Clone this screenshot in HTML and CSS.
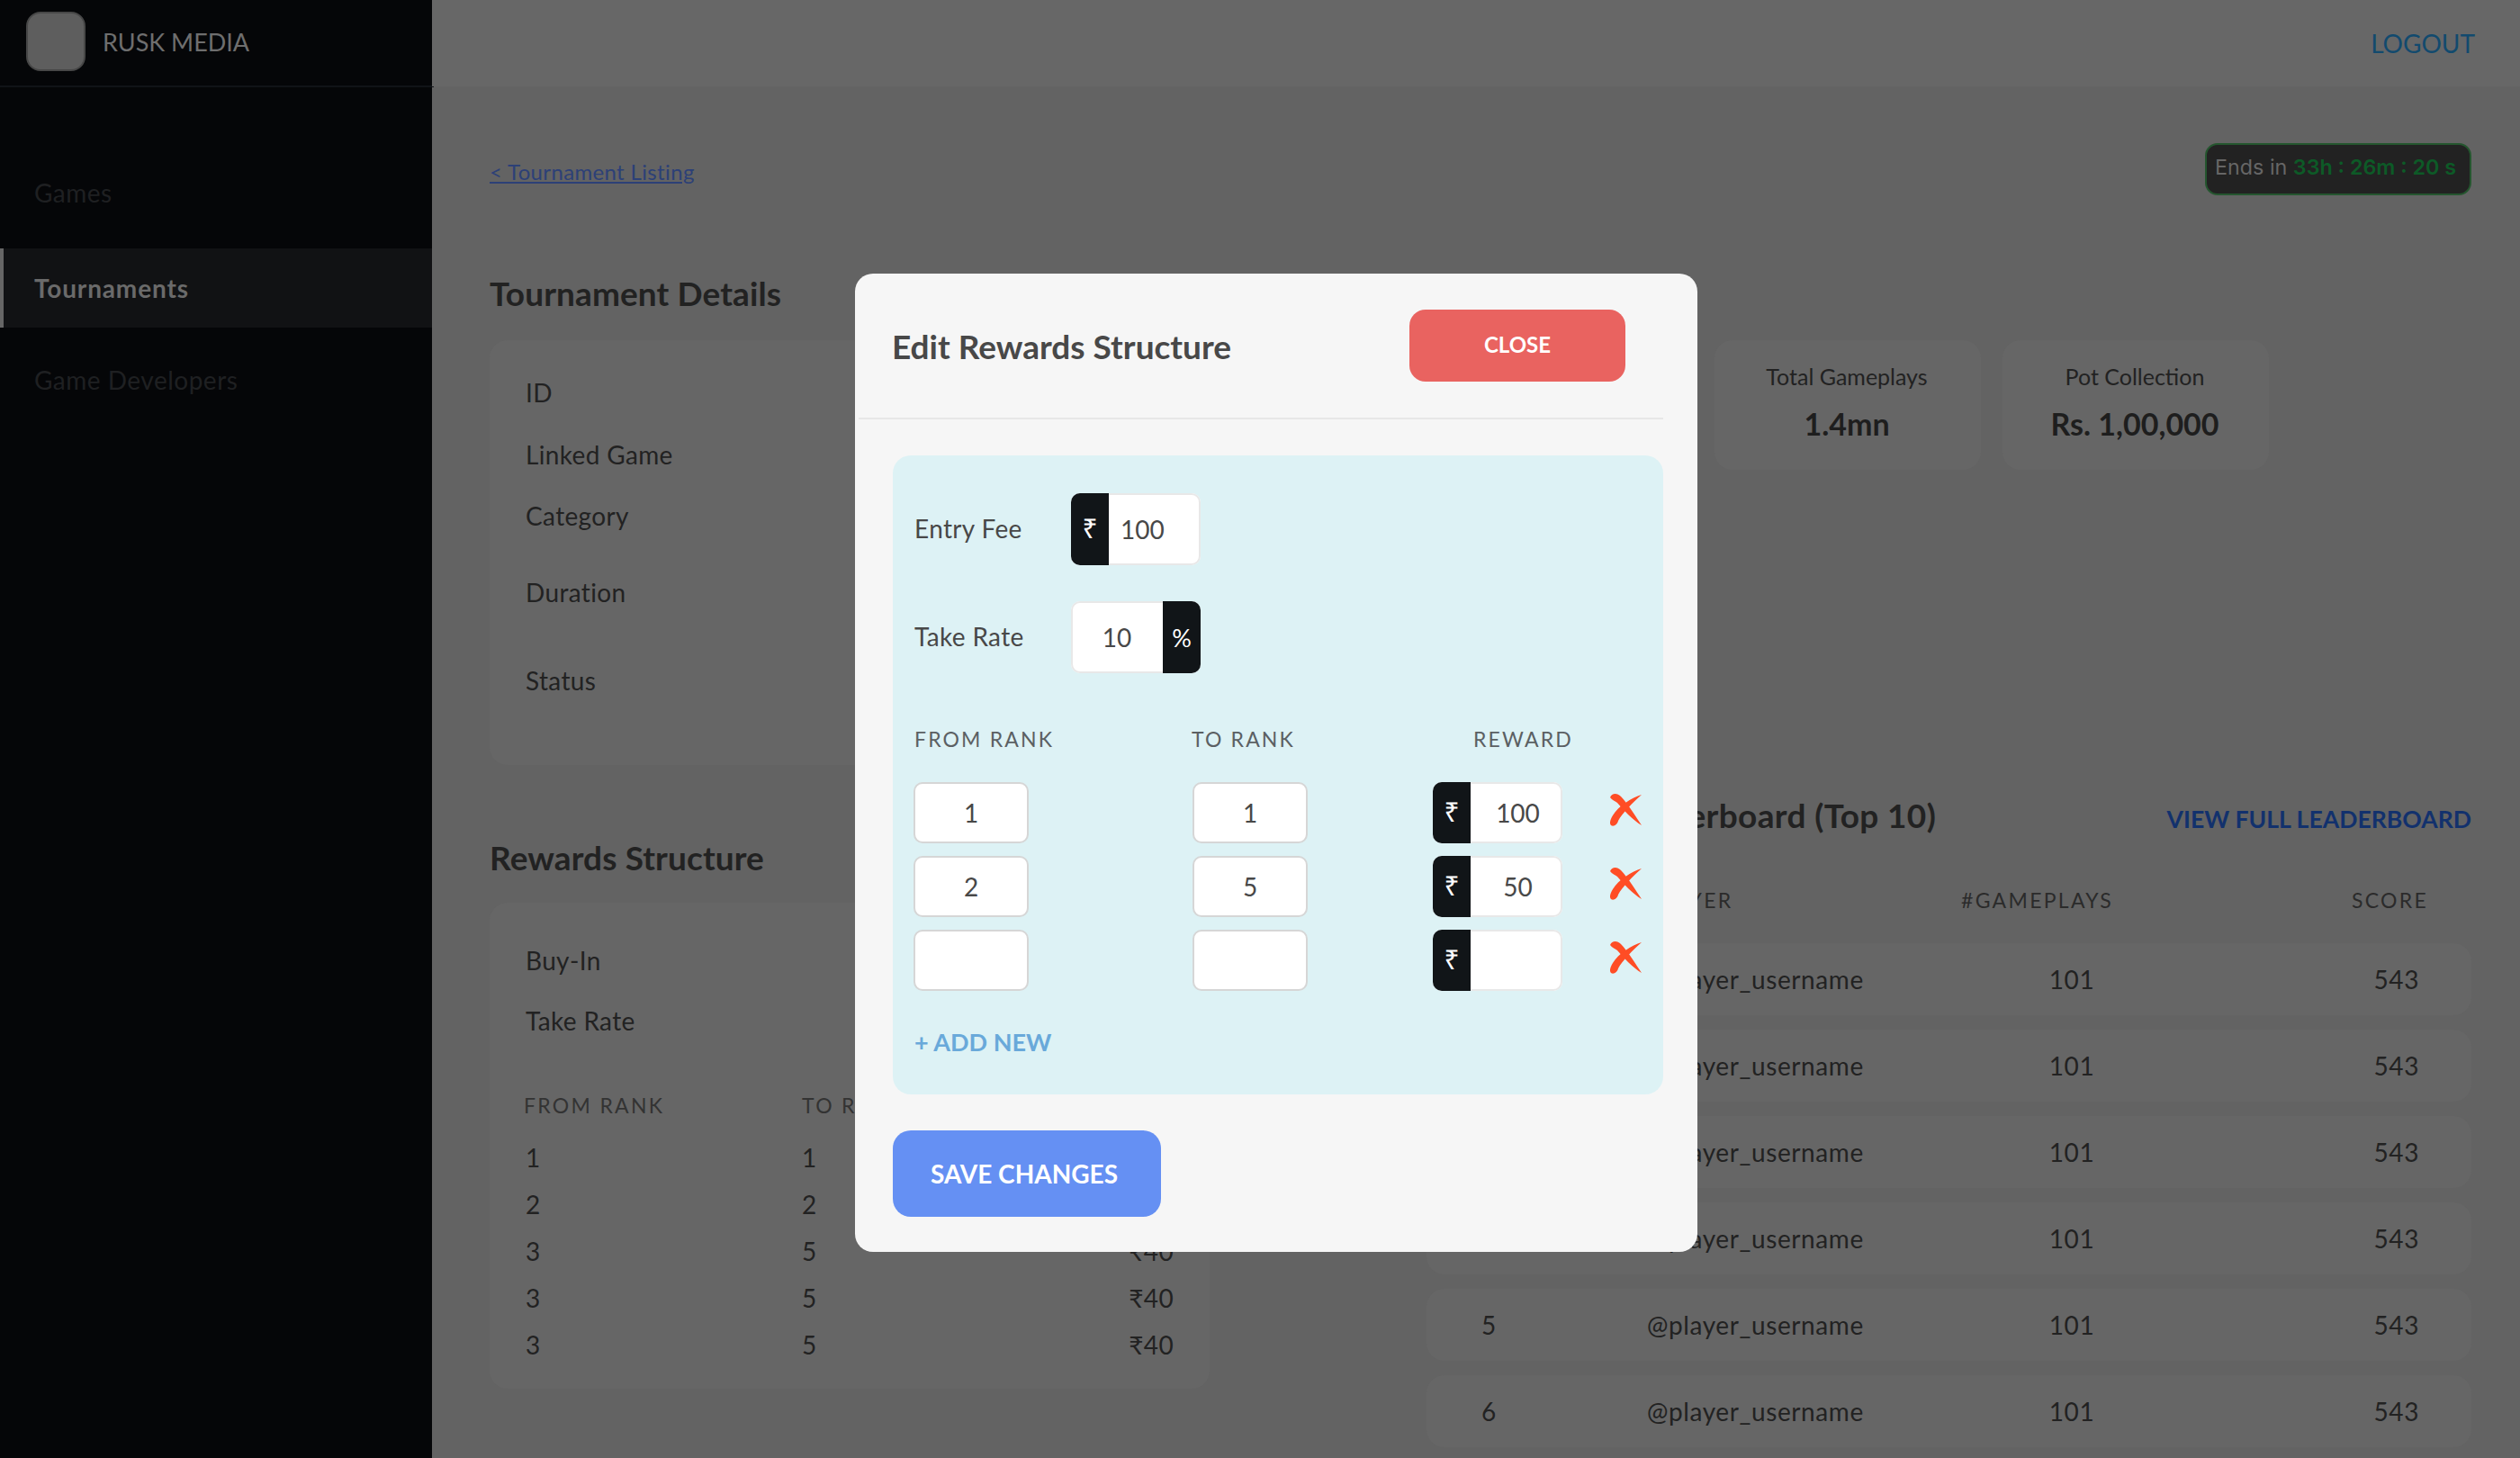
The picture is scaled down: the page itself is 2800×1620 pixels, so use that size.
FILE: index.html
```html
<!DOCTYPE html>
<html lang="en">
<head>
<meta charset="utf-8">
<title>Edit Rewards Structure</title>
<link rel="stylesheet" href="styles.css">
</head>
<body>
<div class="app">
  <aside class="sidebar">
    <div class="brand"><span class="logo"></span><span class="brand-name">RUSK MEDIA</span></div>
    <nav class="nav">
      <a class="nav-item">Games</a>
      <a class="nav-item active">Tournaments</a>
      <a class="nav-item">Game Developers</a>
    </nav>
  </aside>
  <div class="main">
    <header class="topbar"><a class="logout">LOGOUT</a></header>
    <div class="content">
      <div class="crumbs">
        <a class="back">&lt; Tournament Listing</a>
        <div class="timer">Ends in <b>33h : 26m : 20 s</b></div>
      </div>
      <div class="columns">
        <div class="col-left">
          <h2 class="h-details">Tournament Details</h2>
          <section class="card details">
            <p class="r-id">ID</p>
            <p class="r-game">Linked Game</p>
            <p class="r-cat">Category</p>
            <p class="r-dur">Duration</p>
            <p class="r-status">Status</p>
          </section>
          <h2 class="h-rewards">Rewards Structure</h2>
          <section class="card rewards">
            <p class="r-buy">Buy-In</p>
            <p class="r-take">Take Rate</p>
            <div class="rw-grid rw-head"><span>FROM RANK</span><span>TO RANK</span><span class="amt">REWARD</span></div>
            <div class="rw-grid"><span>1</span><span>1</span><span class="amt">₹100</span></div>
            <div class="rw-grid"><span>2</span><span>2</span><span class="amt">₹50</span></div>
            <div class="rw-grid"><span>3</span><span>5</span><span class="amt">₹40</span></div>
            <div class="rw-grid"><span>3</span><span>5</span><span class="amt">₹40</span></div>
            <div class="rw-grid"><span>3</span><span>5</span><span class="amt">₹40</span></div>
          </section>
        </div>
        <div class="col-right">
          <div class="stats">
            <div class="card stat"></div>
            <div class="card stat"><span>Total Gameplays</span><strong>1.4mn</strong></div>
            <div class="card stat"><span>Pot Collection</span><strong>Rs. 1,00,000</strong></div>
          </div>
          <div class="lb-title"><h2>Tournament Leaderboard (Top 10)</h2><a>VIEW FULL LEADERBOARD</a></div>
          <div class="lb-grid lb-head"><span></span><span>PLAYER</span><span>#GAMEPLAYS</span><span class="c-score">SCORE</span></div>
          <div class="lb-grid lb-row"><span>1</span><span>@player_username</span><span class="c-num">101</span><span class="c-sc">543</span></div>
          <div class="lb-grid lb-row"><span>2</span><span>@player_username</span><span class="c-num">101</span><span class="c-sc">543</span></div>
          <div class="lb-grid lb-row"><span>3</span><span>@player_username</span><span class="c-num">101</span><span class="c-sc">543</span></div>
          <div class="lb-grid lb-row"><span>4</span><span>@player_username</span><span class="c-num">101</span><span class="c-sc">543</span></div>
          <div class="lb-grid lb-row"><span>5</span><span>@player_username</span><span class="c-num">101</span><span class="c-sc">543</span></div>
          <div class="lb-grid lb-row"><span>6</span><span>@player_username</span><span class="c-num">101</span><span class="c-sc">543</span></div>
        </div>
      </div>
    </div>
  </div>
</div>

<div class="modal">
  <div class="modal-head">
    <h3>Edit Rewards Structure</h3>
    <button class="btn-close">CLOSE</button>
  </div>
  <div class="panel">
    <div class="fee-row">
      <label>Entry Fee</label>
      <div class="addon"><i class="pre">₹</i><span class="val left">100</span></div>
    </div>
    <div class="fee-row second">
      <label>Take Rate</label>
      <div class="addon"><span class="val">10</span><i class="post">%</i></div>
    </div>
    <div class="edit-grid edit-head"><span>FROM RANK</span><span>TO RANK</span><span>REWARD</span></div>
    <div class="edit-grid row">
      <span class="box">1</span><span class="box">1</span>
      <div class="addon short"><i class="pre">₹</i><span class="val">100</span></div>
      <svg class="del" viewBox="0 0 36 36"><use href="#cross"/></svg>
    </div>
    <div class="edit-grid row">
      <span class="box">2</span><span class="box">5</span>
      <div class="addon short"><i class="pre">₹</i><span class="val">50</span></div>
      <svg class="del" viewBox="0 0 36 36"><use href="#cross"/></svg>
    </div>
    <div class="edit-grid row">
      <span class="box"></span><span class="box"></span>
      <div class="addon short"><i class="pre">₹</i><span class="val"></span></div>
      <svg class="del" viewBox="0 0 36 36"><use href="#cross"/></svg>
    </div>
    <a class="add-new">+ ADD NEW</a>
  </div>
  <button class="btn-save">SAVE CHANGES</button>
</div>

<svg class="defs" width="0" height="0"><defs>
  <g id="cross" fill="#ff4d25">
    <path d="M0 4C2 -1 8 -1 12 3C19 10 29 26 35 35C26 30 13 16 8 10C6 8 2 7 0 4Z"/>
    <path d="M35 1C24 4 9 14 3 24C0 29 -1 33 1 35C4 37 8 34 9 30C13 22 26 9 35 1Z"/>
  </g>
</defs></svg>
</body>
</html>
```
FILE: styles.css
```css
* { box-sizing: border-box; }
html, body { margin: 0; padding: 0; width: 2800px; height: 1620px; overflow: hidden; }
body { font-family: "Lato", "Noto Sans", sans-serif; color: #1f1f1f; background: #636363; position: relative; }
p, h2, h3 { margin: 0; }
.app { display: flex; width: 2800px; height: 1620px; overflow: hidden; }

/* sidebar */
.sidebar { width: 480px; flex: none; background: #050608; }
.brand { height: 97px; width: 482px; display: flex; align-items: center; gap: 19px; padding: 0 0 3px 29px; border-bottom: 2px solid #111317; }
.logo { width: 66px; height: 66px; border-radius: 16px; background: #5e5e5e; border: 2px solid #474747; }
.brand-name { font-size: 27px; color: #6e6e6e; }
.nav { padding-top: 75px; display: flex; flex-direction: column; gap: 16px; }
.nav-item { height: 88px; line-height: 85px; padding-left: 38px; font-size: 28px; color: #1f2022; letter-spacing: .5px; }
.nav-item.active { background: #111214; color: #6a6a6a; border-left: 4px solid #666; padding-left: 34px; font-weight: 700; line-height: 88px; letter-spacing: .85px; }

/* main */
.main { flex: 1; min-width: 0; }
.topbar { height: 96px; background: #676767; display: flex; justify-content: flex-end; align-items: center; padding-right: 50px; }
.logout { font-size: 28px; color: #124a6e; }
.content { padding: 0 54px 0 64px; }
.crumbs { height: 175px; display: flex; justify-content: space-between; align-items: flex-start; }
.back { margin-top: 80px; font-size: 24px; letter-spacing: .35px; color: #2c4077; text-decoration: underline; }
.timer { margin-top: 63px; height: 58px; width: 296px; border: 2px solid #25562f; border-radius: 14px; background: #222; color: #666; font-family: "Inter", sans-serif; font-size: 23.3px; line-height: 50px; padding-left: 9px; white-space: nowrap; }
.timer b { font-weight: 600; color: #0d5a27; }
.columns { display: flex; justify-content: space-between; }
.col-left { width: 800px; }
.col-right { width: 1161px; margin-top: 107px; }
h2 { font-size: 37px; font-weight: 700; color: #222; letter-spacing: .1px; }
.h-details { height: 107px; line-height: 110px; }
.card { background: #666; border-radius: 20px; }
.details { height: 472px; padding: 38px 0 0 40px; font-size: 28px; letter-spacing: .35px; }
.details p, .rewards > p { height: 40px; line-height: 40px; color: #222; }
.r-game { margin-top: 29px; }
.r-cat { margin-top: 28px; }
.r-dur { margin-top: 45px; }
.r-status { margin-top: 58px; }
.h-rewards { height: 153px; line-height: 40px; padding-top: 83px; }
.rewards { height: 540px; padding: 44px 40px 0 40px; font-size: 28px; letter-spacing: .35px; }
.rewards .r-take { margin-top: 27px; }
.rw-grid { display: grid; grid-template-columns: 307px 1fr auto; height: 52px; line-height: 52px; font-size: 28px; color: #222; }
.rw-grid.rw-head { margin-top: 48px; margin-left: -2px; height: 58px; font-size: 23px; letter-spacing: 2.3px; color: #333; grid-template-columns: 309px 1fr auto; }
.amt { text-align: right; }

/* stats */
.stats { display: flex; gap: 24px; }
.stat { width: 296px; height: 144px; display: flex; flex-direction: column; align-items: center; padding: 22px 2px 0 0; }
.stat span { font-size: 25px; line-height: 36px; color: #222; }
.stat strong { margin-top: 13px; font-size: 34px; line-height: 44px; color: #1e1e1e; font-weight: 700; }

/* leaderboard */
.lb-title { margin-top: 360px; display: flex; justify-content: space-between; align-items: center; height: 50px; }
.lb-title h2 { margin-top: -3px; letter-spacing: .35px; }
.lb-title a { font-size: 26.6px; font-weight: 700; color: #12316d; margin-top: 6px; }
.lb-grid { display: grid; align-items: center; }
.lb-head { height: 70px; margin: 33px 0 -3px; font-size: 23px; letter-spacing: 2.3px; color: #2b2b2b; grid-template-columns: 245px 349px 1fr auto; }
.c-score { padding-right: 48px; }
.lb-row { height: 80px; margin-top: 16px; background: #666; border-radius: 20px; font-size: 28px; letter-spacing: .6px; color: #222; padding-left: 61px; grid-template-columns: 184px 349px 246px 1fr; }
.c-num { text-align: center; }
.c-sc { text-align: right; padding-right: 58px; }

/* modal */
.modal { position: absolute; left: 950px; top: 304px; width: 936px; height: 1087px; background: #f6f6f6; border-radius: 20px; padding: 0 38px 0 42px; }
.modal-head { height: 162px; margin: 0 0 40px -38px; padding-left: 37px; border-bottom: 2px solid #e7e7e7; display: flex; justify-content: space-between; align-items: flex-start; }
.modal-head h3 { font-size: 37px; font-weight: 700; color: #484848; margin-top: 58px; line-height: 46px; }
.btn-close { margin: 40px 42px 0 0; width: 240px; height: 80px; border: 0; border-radius: 18px; background: #e96360; color: #fff; font: 700 24px "Lato", sans-serif; padding-bottom: 4px; }
.panel { background: #ddf2f5; border-radius: 20px; height: 710px; padding: 42px 0 0 24px; color: #484848; }
.fee-row { display: flex; align-items: center; height: 80px; font-size: 28px; letter-spacing: .35px; }
.fee-row.second { margin-top: 40px; }
.fee-row label { width: 174px; padding-bottom: 2px; }
.addon { display: flex; width: 144px; height: 80px; background: #fff; border-radius: 10px; box-shadow: inset 0 0 0 2px #e8e8e8; overflow: hidden; font-size: 28px; letter-spacing: 0; }
.addon.short { height: 68px; }
.pre, .post { width: 42px; flex: none; background: #111518; color: #fff; font-style: normal; font-size: 30px; display: flex; align-items: center; justify-content: center; padding-bottom: 4px; font-family: "Noto Sans", sans-serif; }
.post { font-family: "Lato", sans-serif; font-size: 27px; padding: 0; }
.val { flex: 1; display: flex; align-items: center; justify-content: center; }
.val.left { justify-content: flex-start; padding-left: 13px; }
.short .val { padding-left: 3px; }
.edit-grid { display: grid; grid-template-columns: 310px 267px 197px 40px; align-items: center; margin-left: -1px; }
.edit-head { margin: 53px 0 28px; height: 40px; font-size: 23px; letter-spacing: 2.15px; color: #5b6063; grid-template-columns: 308px 313px 1fr; }
.row { height: 68px; margin-bottom: 14px; font-size: 28px; }
.box { width: 128px; height: 68px; background: #fff; border: 2px solid #d6d6d6; border-radius: 10px; display: flex; align-items: center; justify-content: center; }
.del { width: 36px; height: 36px; margin-top: -6px; }
.add-new { display: block; margin-top: 37px; font-size: 27px; font-weight: 700; color: #69a9da; line-height: 40px; }
.btn-save { margin-top: 40px; width: 298px; height: 96px; border: 0; border-radius: 20px; background: #6590f3; color: #fff; font: 700 28px "Lato", sans-serif; padding: 0 6px 0 0; }
.defs { position: absolute; }
```
